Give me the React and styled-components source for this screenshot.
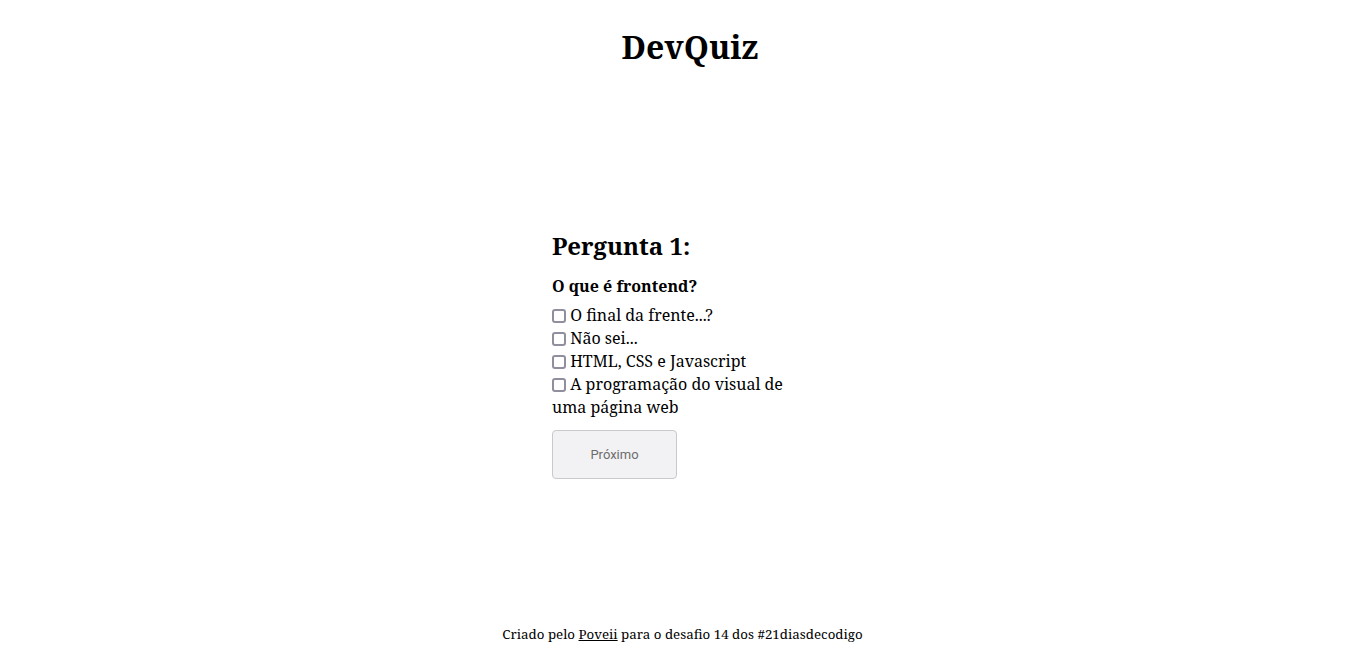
import styled, { createGlobalStyle } from 'styled-components';

const GlobalStyle = createGlobalStyle`
  html, body {
    margin: 0;
    padding: 0;
    background: #fff;
  }
  body {
    font-family: "Noto Serif", "DejaVu Serif", serif;
    color: #000;
  }
`;

const Page = styled.div`
  min-height: 100vh;
  display: flex;
  flex-direction: column;
`;

const Title = styled.h1`
  margin: 25px 0 0 15px;
  text-align: center;
  font-size: 32px;
  font-weight: 700;
`;

const Main = styled.main`
  flex: 1;
  display: flex;
  justify-content: center;
  align-items: center;
  padding-top: 14px;
`;

const Quiz = styled.section`
  width: 261px;
`;

const Question = styled.h2`
  margin: 0 0 13px;
  font-size: 24px;
  font-weight: 700;
`;

const Prompt = styled.h3`
  margin: 0 0 7px;
  font-size: 16px;
  font-weight: 700;
`;

const Options = styled.ul`
  list-style: none;
  margin: 0 0 11px;
  padding: 0;
`;

const Option = styled.li`
  font-size: 16px;
  line-height: 23px;
`;

const Check = styled.input`
  appearance: none;
  box-sizing: border-box;
  margin: 0;
  width: 14px;
  height: 14px;
  border: 2px solid #8f8f9d;
  border-radius: 3px;
  background: #fff;
  vertical-align: -2px;
`;

const NextButton = styled.button`
  width: 125px;
  height: 49px;
  background: #f2f2f4;
  border: 1px solid #c9c9cc;
  border-radius: 4px;
  font-family: Roboto, "Noto Sans", sans-serif;
  font-size: 13px;
  color: #6d6d6d;
`;

const Footer = styled.footer`
  text-align: center;
  font-size: 13.33px;
  padding-bottom: 8px;

  a {
    color: inherit;
  }
`;

const options = [
  'O final da frente...?',
  'Não sei...',
  'HTML, CSS e Javascript',
  'A programação do visual de uma página web',
];

const App = () => {
  return (
    <Page>
      <GlobalStyle />
      <Title>DevQuiz</Title>
      <Main>
        <Quiz>
          <Question>Pergunta 1:</Question>
          <Prompt>O que é frontend?</Prompt>
          <Options>
            {options.map((text) => (
              <Option key={text}>
                <label>
                  <Check type="checkbox" /> {text}
                </label>
              </Option>
            ))}
          </Options>
          <NextButton disabled>Próximo</NextButton>
        </Quiz>
      </Main>
      <Footer>
        Criado pelo <a href="#">Poveii</a> para o desafio 14 dos #21diasdecodigo
      </Footer>
    </Page>
  );
};

export default App;
